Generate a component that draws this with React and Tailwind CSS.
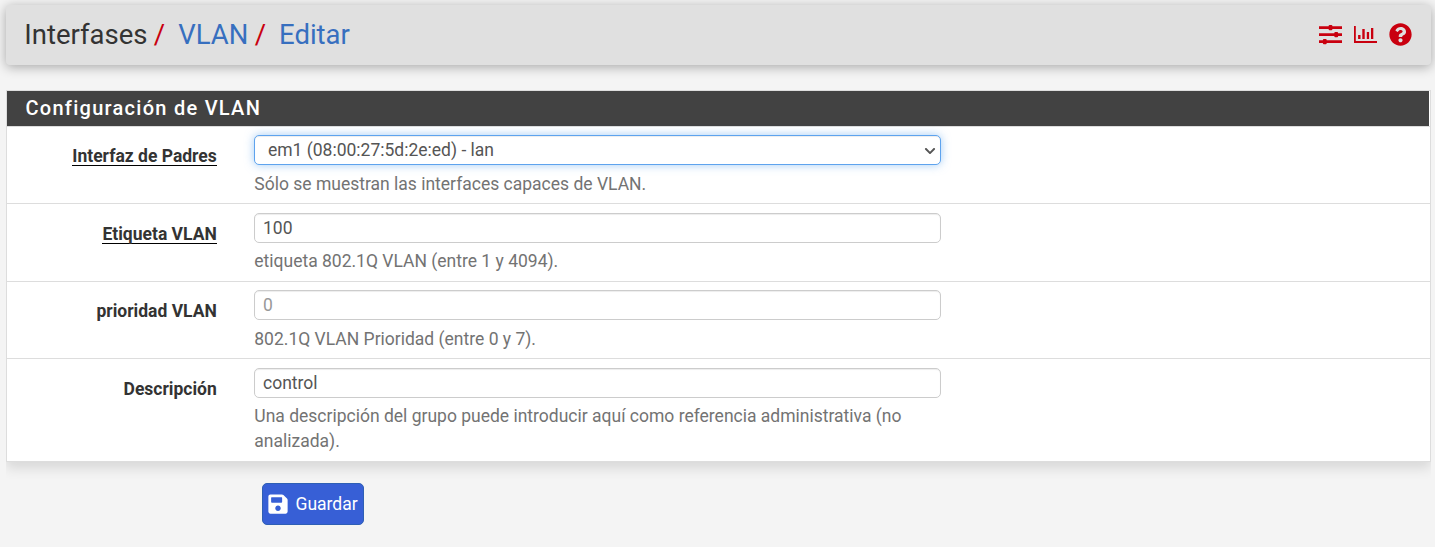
import { FaChevronDown, FaQuestionCircle, FaSave } from "react-icons/fa";

function SlidersIcon() {
  return (
    <svg width="23" height="20" viewBox="0 0 23 20" fill="currentColor">
      <path d="M0 1.2h23v2.8H0zM0 8.2h23v2.8H0zM0 15.2h23v2.8H0z" />
      <rect x="9.6" y="0" width="3.8" height="5.3" rx="1" />
      <rect x="15.3" y="7" width="3.8" height="5.3" rx="1" />
      <rect x="3.9" y="14" width="3.8" height="5.3" rx="1" />
    </svg>
  );
}

function ChartIcon() {
  return (
    <svg width="23" height="18" viewBox="0 0 23 18" fill="currentColor">
      <path d="M0 0h1.8v15H23v2H0zM4.1 9h2.4v4H4.1zM8.3 3h2.4v10H8.3zM12.8 6h2.3v7H12.8zM17 2h2.3v11H17z" />
    </svg>
  );
}

function Row({ label, required, help, height, pad = "pt-[9px]", labelPad = "pt-[17px]", helpGap = "mt-[6px]", last, children }) {
  return (
    <div className={`flex border-[#dddddd] ${height} ${last ? "" : "border-b"}`}>
      <div className={`w-[209.8px] shrink-0 text-right font-bold text-[#333333] ${labelPad}`}>
        <span className={required ? "inline-block h-[22px] border-b border-black leading-[25px]" : "inline-block h-[22px] leading-[25px]"}>{label}</span>
      </div>
      <div className={`ml-[37.2px] w-[687px] ${pad}`}>
        {children}
        <p className={`pl-[0.3px] leading-[25px] text-[#737373] ${helpGap}`}>{help}</p>
      </div>
    </div>
  );
}

const field =
  "block h-[30px] w-full rounded-[5px] border bg-white px-2 text-[17.5px] leading-[28px] text-[#555555] outline-none";
const plain = " border-[#cccccc] shadow-[inset_0_1px_1px_rgba(0,0,0,0.075)] placeholder:text-[#999999]";

export default function App() {
  return (
    <div className="h-[547px] overflow-hidden bg-[#f4f4f4] pt-[5px] pl-[6px] font-[Roboto,sans-serif] text-[17.5px]">
      <header className="flex h-[60px] w-[1425px] items-center justify-between rounded-[4px] bg-[#e0e0e0] pr-[19px] pl-[18.3px] shadow-[0_2px_12px_rgba(0,0,0,0.32)]">
        <h1 className="text-[27.5px] leading-[30px] whitespace-pre text-[#333333]">
          Interfases<span className="ml-[6.3px] text-[#c9000f]">/</span>
          <a className="ml-[13px] text-[#376fbf]">VLAN</a>
          <span className="ml-[6.3px] text-[#c9000f]">/</span>
          <a className="ml-[13px] text-[#376fbf]">Editar</a>
        </h1>
        <div className="flex items-center gap-3 text-[#c9000f]">
          <SlidersIcon />
          <ChartIcon />
          <FaQuestionCircle size={23} className="mb-[2px]" />
        </div>
      </header>

      <main className="mt-[25px] h-[372px] w-[1425px] border border-[#dddddd] bg-white shadow-[0_6px_12px_rgba(0,0,0,0.12)] [clip-path:inset(0_0_-20px_0)]">
        <h2 className="mr-px h-[35px] bg-[#424242] pl-[18.5px] text-[20px] leading-[34px] font-medium tracking-[1.27px] text-white">
          Configuración de VLAN
        </h2>
        <div className="border-t border-[#dddddd]">
          <Row label="Interfaz de Padres" required height="h-[77px]" pad="pt-[8px]" labelPad="pt-[16px]" helpGap="mt-[7px]" help="Sólo se muestran las interfaces capaces de VLAN.">
            <div className={field + " flex items-center justify-between border-[#5ea3ee] pr-[4px] pl-[13px] shadow-[inset_0_1px_1px_rgba(0,0,0,0.075),0_0_10px_rgba(102,170,238,0.6)]"}>
              <span>em1 (08:00:27:5d:2e:ed) - lan</span>
              <FaChevronDown size={12} className="mt-px" />
            </div>
          </Row>
          <Row label="Etiqueta VLAN" required height="h-[78px]" help="etiqueta 802.1Q VLAN (entre 1 y 4094).">
            <input className={field + plain} defaultValue="100" />
          </Row>
          <Row label="prioridad VLAN" height="h-[77px]" pad="pt-[8px]" labelPad="pt-[16px]" helpGap="mt-[7px]" help="802.1Q VLAN Prioridad (entre 0 y 7).">
            <input className={field + plain} placeholder="0" />
          </Row>
          <Row label="Descripción" height="h-[102px]" last help="Una descripción del grupo puede introducir aquí como referencia administrativa (no analizada).">
            <input className={field + plain} defaultValue="control" />
          </Row>
        </div>
      </main>

      <button className="mt-[21px] ml-[256px] flex h-[42px] w-[102px] items-center rounded-[5px] border border-[#2e5fb5] bg-[#375fd6] pl-[4px] text-white">
        <FaSave size={22} className="mb-px" />
        <span className="ml-[6.5px]">Guardar</span>
      </button>
    </div>
  );
}
